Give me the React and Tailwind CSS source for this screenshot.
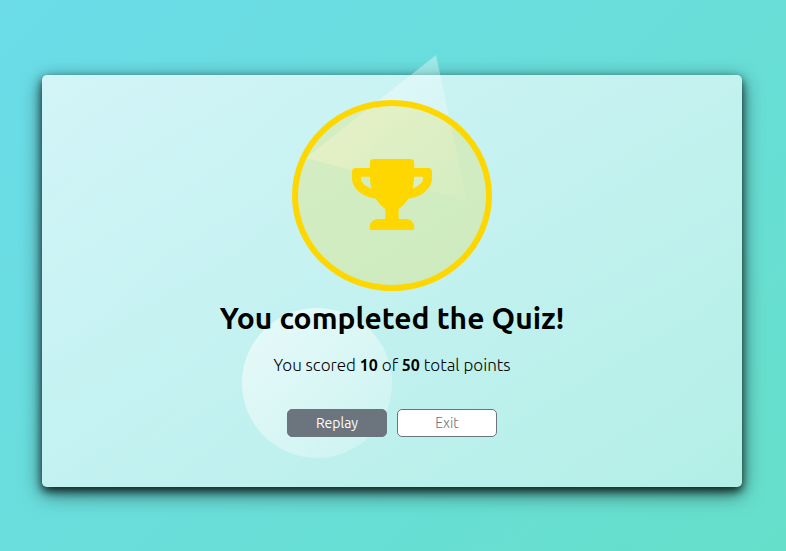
import { FaTrophy } from "react-icons/fa";

function Triangle() {
  return (
    <svg
      className="pointer-events-none absolute left-[264px] top-[-20px] h-[148px] w-[162px]"
      viewBox="0 0 162 148"
      aria-hidden="true"
    >
      <defs>
        <linearGradient id="triangle-fill" x1="0" y1="0" x2="1" y2="1">
          <stop offset="0.1" stopColor="#fff" stopOpacity="0.5" />
          <stop offset="0.95" stopColor="#fff" stopOpacity="0.1" />
        </linearGradient>
      </defs>
      <path d="M130 0 L0 103 L161 146 Z" fill="url(#triangle-fill)" />
    </svg>
  );
}

export default function App() {
  return (
    <main className="flex min-h-screen items-center justify-center bg-linear-[135deg,#6bdce9,#66dfca] pt-[75px] pr-11 pb-16 pl-[42px] font-['Ubuntu','Noto_Sans',sans-serif] text-black">
      <section className="relative flex w-full max-w-[700px] flex-col items-center rounded-[5px] bg-[linear-gradient(to_bottom_right,rgba(255,255,255,0.7),rgba(255,255,255,0.5))] px-6 pt-[25px] pb-[50px] shadow-[0_4px_8px_0_rgba(0,0,0,0.7),0_6px_20px_0_rgba(0,0,0,0.6)]">
        <Triangle />
        <div
          className="pointer-events-none absolute left-[200px] top-[233px] size-[150px] rounded-full bg-linear-[135deg,rgba(255,255,255,0.6),rgba(255,255,255,0.2)]"
          aria-hidden="true"
        />
        <div className="relative flex h-[191px] w-[200px] items-center justify-center rounded-[50%] border-6 border-[#ffd700] bg-[#ffd700]/20 pb-0.5">
          <FaTrophy className="h-[71px] w-20 text-[#ffd700]" aria-hidden="true" />
        </div>
        <h1 className="relative mt-2 text-center text-[30px] leading-[38px] font-bold">
          You completed the Quiz!
        </h1>
        <p className="relative mt-4 text-center font-['Ubuntu_Light','Ubuntu','Noto_Sans',sans-serif] text-[17px] leading-6 font-light">
          You scored <strong className="font-['Ubuntu','Noto_Sans',sans-serif] text-base font-bold">10</strong> of{" "}
          <strong className="font-['Ubuntu','Noto_Sans',sans-serif] text-base font-bold">50</strong> total points
        </p>
        <div className="relative mt-8 flex gap-2.5">
          <button
            type="button"
            className="h-7 w-[100px] rounded-[5px] border border-[#6c757d] bg-[#6c757d] text-sm leading-5 text-white"
          >
            Replay
          </button>
          <button
            type="button"
            className="h-7 w-[100px] rounded-[5px] border border-[#6c757d] bg-white text-sm leading-5 font-light text-[#6c757d]"
          >
            Exit
          </button>
        </div>
      </section>
    </main>
  );
}
